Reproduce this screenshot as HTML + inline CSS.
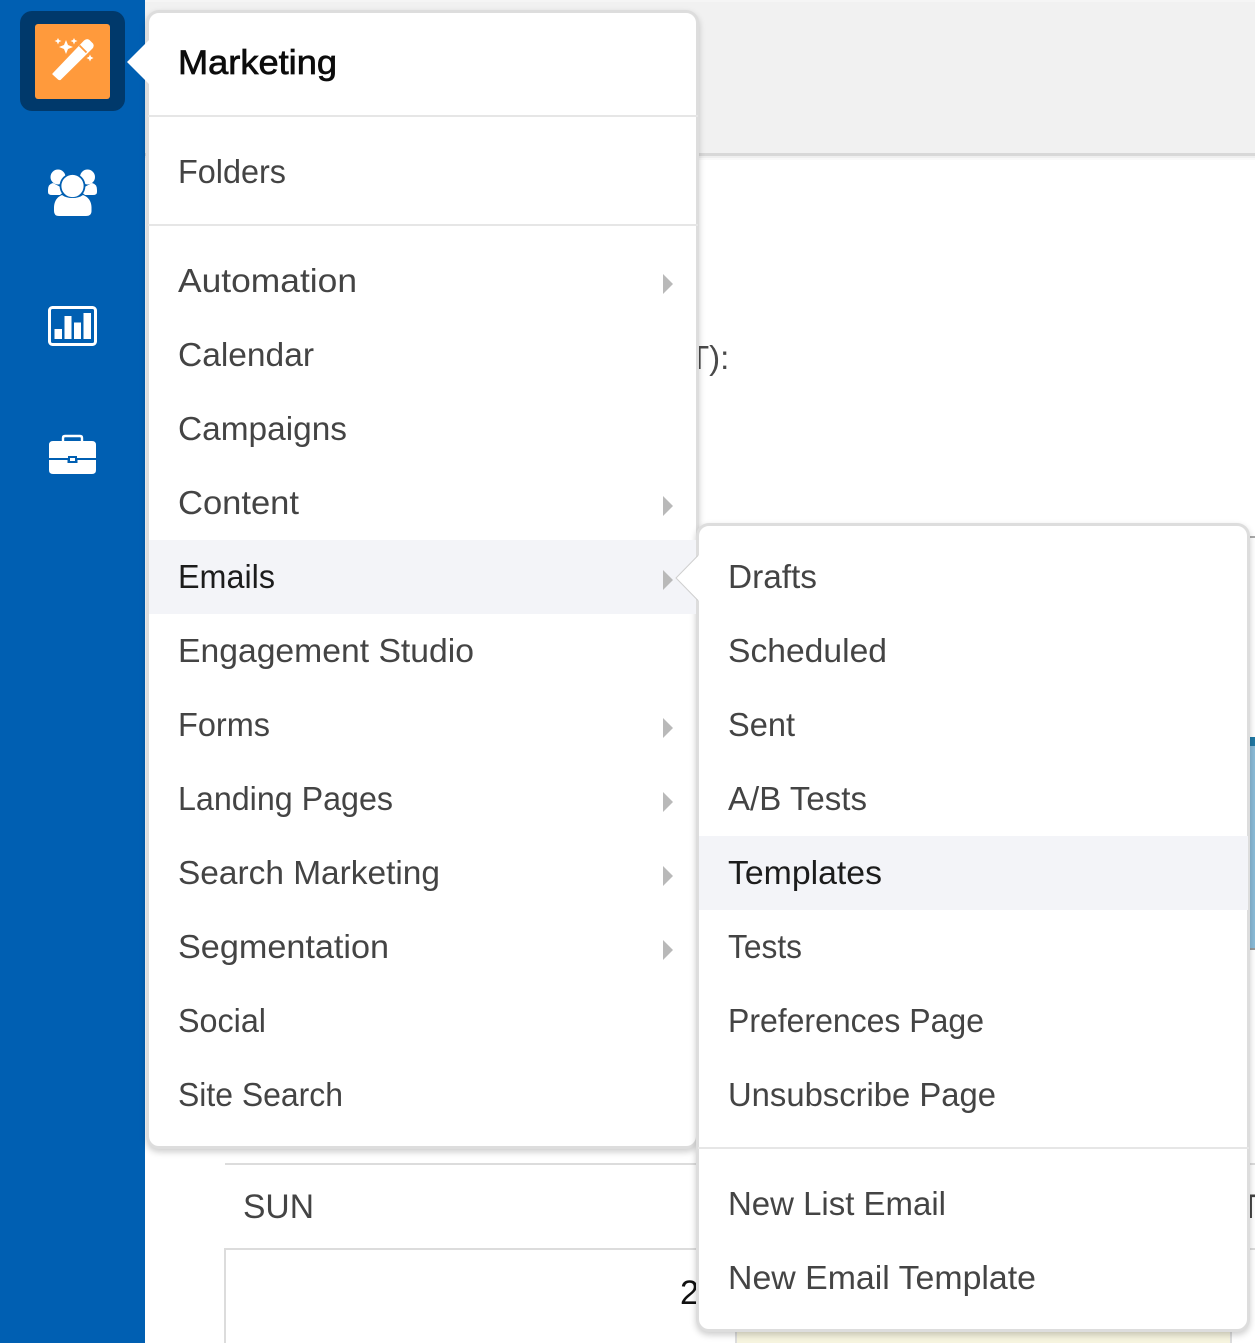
<!DOCTYPE html>
<html><head><meta charset="utf-8"><style>
html,body{margin:0;padding:0;background:#fff;width:1255px;height:1343px;overflow:hidden}
.a{position:absolute}
svg{position:absolute;left:0;top:0}
text{font-family:"Liberation Sans",sans-serif;font-size:33px;fill:#444;}
.m{position:absolute;background:#fff;border:3px solid #dddddd;box-sizing:border-box;border-radius:13px;box-shadow:0 3px 7px rgba(0,0,0,.2)}
</style></head><body>
<svg width="1255" height="1343" viewBox="0 0 1255 1343">
<rect x="145" y="0" width="1110" height="153" fill="#f1f1f1"/>
<rect x="145" y="0" width="1110" height="2" fill="#f5f5f5"/>
<rect x="145" y="153" width="1110" height="3" fill="#d8d8d8"/>
<rect x="145" y="156" width="1110" height="2" fill="#efefef"/>
<rect x="145" y="158" width="1110" height="2" fill="#f9f9f9"/>
<text x="689" y="369" style="font-size:33px;fill:#4a4a4a">T):</text>
<rect x="1240" y="536" width="15" height="2" fill="#aaa"/>
<rect x="1240" y="737" width="15" height="9" fill="#1f78a4"/>
<rect x="1240" y="746" width="15" height="202" fill="#8abbd8"/>
<rect x="1240" y="948" width="15" height="2" fill="#999"/>
<rect x="225" y="1163" width="1030" height="2" fill="#dcdcdc"/>
<rect x="225" y="1248" width="1030" height="2" fill="#dcdcdc"/>
<rect x="224" y="1248" width="2" height="95" fill="#dcdcdc"/>
<text x="243" y="1218" textLength="71" lengthAdjust="spacingAndGlyphs" style="font-size:34px">SUN</text>
<text x="1240" y="1218" style="font-size:34px">T</text>
<text x="680" y="1304" style="font-size:34px;fill:#111">2</text>
<rect x="735" y="1320" width="496" height="23" fill="#f6f4df"/>
<rect x="735" y="1320" width="2" height="23" fill="#dcdcdc"/>
<rect x="1230" y="1320" width="2" height="23" fill="#dcdcdc"/>
</svg>
<div class="a" style="left:0;top:0;width:145px;height:1343px;background:#005fb2"></div>
<div class="a" style="left:20px;top:11px;width:105px;height:100px;background:#00396b;border-radius:12px"></div>
<div class="a" style="left:35px;top:24px;width:75px;height:75px;background:#ff9a3c;border-radius:3px"></div>
<div class="m" style="left:146px;top:10px;width:553px;height:1139px"></div>
<div class="m" style="left:696px;top:523px;width:554px;height:809px"></div>
<svg width="1255" height="1343" viewBox="0 0 1255 1343">
<!-- pointer to main menu -->
<path d="M127 62 L149 40 V84 Z" fill="#fff"/>
<!-- wand -->
<path d="M52.500 73.500 L84 40.500 Q87 38 89.500 40 L93 43.500 Q94.500 46 92.500 48.500 L60.500 80 Q59 80.500 58 79.500 L52.500 74.500 Q52 74 52.500 73.500 Z" fill="#fff"/>
<path d="M79.500 45.500 L86.500 52.500" stroke="#ff9a3c" stroke-width="1.800" fill="none"/>
<path d="M66 40 L68 45 L73 47 L68 49 L66 54 L64 49 L59 47 L64 45 Z" fill="#fff"/>
<path d="M58 38 L59 40 L61.500 41 L59 42 L58 44.500 L57 42 L54.500 41 L57 40 Z" fill="#fff"/>
<path d="M74 38 L75 40 L77.500 41 L75 42 L74 44.500 L73 42 L70.500 41 L73 40 Z" fill="#fff"/>
<path d="M90 54.500 L91 56.800 L93.500 58 L91 59.200 L90 61.500 L89 59.200 L86.500 58 L89 56.800 Z" fill="#fff"/>
<!-- people -->
<circle cx="58" cy="177" r="7.500" fill="#fff"/>
<circle cx="87.500" cy="177" r="7.500" fill="#fff"/>
<path d="M53 183 Q48 184 48 190 V192 Q48 195 52 195 H60 L66 190 Z" fill="#fff"/>
<path d="M92 183 Q97 184 97 190 V192 Q97 195 93 195 H85 L79 190 Z" fill="#fff"/>
<circle cx="72.500" cy="186" r="12" fill="#fff" stroke="#005fb2" stroke-width="1.800"/>
<path d="M62 195 Q66 198 72.500 198 Q79 198 83 195 Q91 198 91.500 207 V211 Q91.500 216 86 216 H59 Q54 216 54 211 V207 Q54.500 198 62 195 Z" fill="#fff"/>
<!-- chart -->
<rect x="49.500" y="307.500" width="46" height="37" rx="3" fill="none" stroke="#fff" stroke-width="3"/>
<rect x="54.500" y="329" width="7.500" height="10" fill="#fff"/>
<rect x="64.500" y="316" width="7" height="23" fill="#fff"/>
<rect x="74" y="322.500" width="7" height="16.500" fill="#fff"/>
<rect x="83.500" y="313" width="7.500" height="26" fill="#fff"/>
<!-- briefcase -->
<path d="M63 441 V438 Q63 436 65 436 H80 Q82 436 82 438 V441" fill="none" stroke="#fff" stroke-width="2.400"/>
<path d="M53 441 H92 Q96 441 96 445 V458 H77 V456 H68 V458 H49 V445 Q49 441 53 441 Z" fill="#fff"/>
<path d="M49 460 H67.500 V463 H77.500 V460 H96 V470 Q96 474 92 474 H53 Q49 474 49 470 Z" fill="#fff"/>
<rect x="70" y="458" width="5" height="3" fill="#fff"/>
<!-- main menu separators / hover -->
<rect x="148" y="115" width="550" height="2" fill="#e6e6e6"/>
<rect x="148" y="224" width="550" height="2" fill="#e6e6e6"/>
<rect x="149" y="540" width="547" height="74" fill="#f3f4f8"/>
<rect x="699" y="836" width="549" height="74" fill="#f3f4f8"/>
<rect x="698" y="1147" width="551" height="2" fill="#e6e6e6"/>
<!-- pointer to sub-menu -->
<path d="M699 555 L676 578 L699 601 Z" fill="#fff"/>
<path d="M698 555.500 L676 578 L698 600.500" fill="none" stroke="#cfcfcf" stroke-width="1"/>
<!-- chevrons -->
<g fill="#b9b9b9">
<path d="M663 274 L673 284 L663 294 Z"/>
<path d="M663 496 L673 506 L663 516 Z"/>
<path d="M663 570 L673 580 L663 590 Z"/>
<path d="M663 718 L673 728 L663 738 Z"/>
<path d="M663 792 L673 802 L663 812 Z"/>
<path d="M663 866 L673 876 L663 886 Z"/>
<path d="M663 940 L673 950 L663 960 Z"/>
</g>
<!-- main menu text -->
<text x="178" y="74" textLength="159" lengthAdjust="spacingAndGlyphs" style="font-size:34px;fill:#0c0c0c;stroke:#0c0c0c;stroke-width:.7px">Marketing</text>
<text x="178" y="183" textLength="108" lengthAdjust="spacingAndGlyphs">Folders</text>
<text x="178" y="292" textLength="179" lengthAdjust="spacingAndGlyphs">Automation</text>
<text x="178" y="366" textLength="136" lengthAdjust="spacingAndGlyphs">Calendar</text>
<text x="178" y="440" textLength="169" lengthAdjust="spacingAndGlyphs">Campaigns</text>
<text x="178" y="514" textLength="121" lengthAdjust="spacingAndGlyphs">Content</text>
<text x="178" y="588" textLength="97" lengthAdjust="spacingAndGlyphs" style="fill:#1c1c1c">Emails</text>
<text x="178" y="662" textLength="296" lengthAdjust="spacingAndGlyphs">Engagement Studio</text>
<text x="178" y="736" textLength="92" lengthAdjust="spacingAndGlyphs">Forms</text>
<text x="178" y="810" textLength="215" lengthAdjust="spacingAndGlyphs">Landing Pages</text>
<text x="178" y="884" textLength="262" lengthAdjust="spacingAndGlyphs">Search Marketing</text>
<text x="178" y="958" textLength="211" lengthAdjust="spacingAndGlyphs">Segmentation</text>
<text x="178" y="1032" textLength="88" lengthAdjust="spacingAndGlyphs">Social</text>
<text x="178" y="1106" textLength="165" lengthAdjust="spacingAndGlyphs">Site Search</text>
<!-- sub menu text -->
<text x="728" y="588" textLength="89" lengthAdjust="spacingAndGlyphs">Drafts</text>
<text x="728" y="662" textLength="159" lengthAdjust="spacingAndGlyphs">Scheduled</text>
<text x="728" y="736" textLength="67" lengthAdjust="spacingAndGlyphs">Sent</text>
<text x="728" y="810" textLength="139" lengthAdjust="spacingAndGlyphs">A/B Tests</text>
<text x="728" y="884" textLength="154" lengthAdjust="spacingAndGlyphs" style="fill:#1c1c1c">Templates</text>
<text x="728" y="958" textLength="74" lengthAdjust="spacingAndGlyphs">Tests</text>
<text x="728" y="1032" textLength="256" lengthAdjust="spacingAndGlyphs">Preferences Page</text>
<text x="728" y="1106" textLength="268" lengthAdjust="spacingAndGlyphs">Unsubscribe Page</text>
<text x="728" y="1215" textLength="218" lengthAdjust="spacingAndGlyphs">New List Email</text>
<text x="728" y="1289" textLength="308" lengthAdjust="spacingAndGlyphs">New Email Template</text>
</svg>
</body></html>
